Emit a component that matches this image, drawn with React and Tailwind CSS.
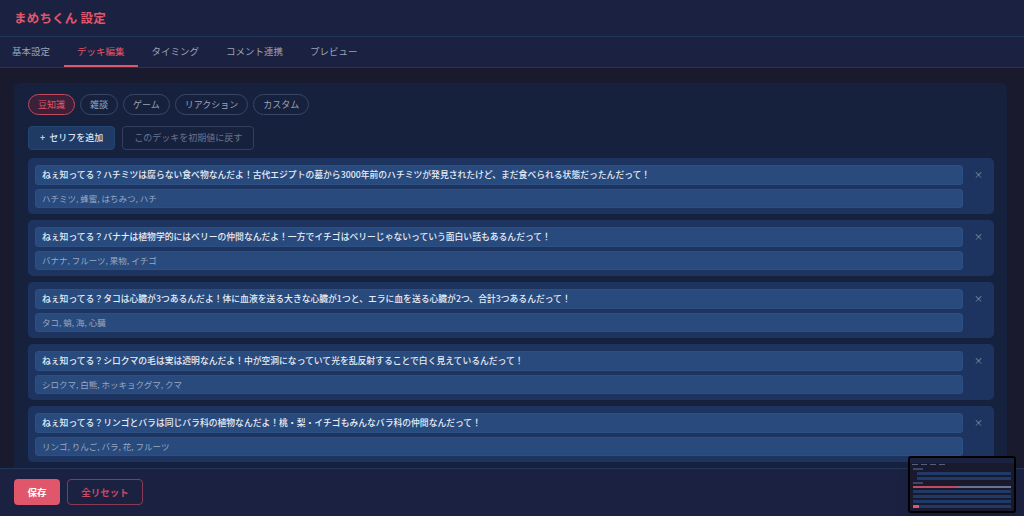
import { useState } from 'react'

const tabs = ['基本設定', 'デッキ編集', 'タイミング', 'コメント連携', 'プレビュー']
const decks = ['豆知識', '雑談', 'ゲーム', 'リアクション', 'カスタム']

const lines = [
  {
    text: 'ねぇ知ってる？ハチミツは腐らない食べ物なんだよ！古代エジプトの墓から3000年前のハチミツが発見されたけど、まだ食べられる状態だったんだって！',
    keys: 'ハチミツ, 蜂蜜, はちみつ, ハチ',
  },
  {
    text: 'ねぇ知ってる？バナナは植物学的にはベリーの仲間なんだよ！一方でイチゴはベリーじゃないっていう面白い話もあるんだって！',
    keys: 'バナナ, フルーツ, 果物, イチゴ',
  },
  {
    text: 'ねぇ知ってる？タコは心臓が3つあるんだよ！体に血液を送る大きな心臓が1つと、エラに血を送る心臓が2つ、合計3つあるんだって！',
    keys: 'タコ, 蛸, 海, 心臓',
  },
  {
    text: 'ねぇ知ってる？シロクマの毛は実は透明なんだよ！中が空洞になっていて光を乱反射することで白く見えているんだって！',
    keys: 'シロクマ, 白熊, ホッキョクグマ, クマ',
  },
  {
    text: 'ねぇ知ってる？リンゴとバラは同じバラ科の植物なんだよ！桃・梨・イチゴもみんなバラ科の仲間なんだって！',
    keys: 'リンゴ, りんご, バラ, 花, フルーツ',
  },
  {
    text: 'ねぇ知ってる？キリンの舌は青黒い色をしているんだよ！日焼けを防ぐためなんだって！',
    keys: 'キリン, 動物, 舌',
  },
]

function MiniPreview() {
  return (
    <div className="absolute bottom-[3px] right-[8px] h-[57px] w-[108px] overflow-hidden rounded-[3px] border-2 border-black bg-[#1a1a2e] shadow-lg">
      <div className="h-[5px] bg-[#1b2140]" />
      <div className="flex gap-[3px] px-[2px] pt-[1px]">
        <div className="h-[1px] w-[6px] bg-[#56607a]" />
        <div className="h-[1px] w-[6px] bg-[#56607a]" />
        <div className="h-[1px] w-[6px] bg-[#56607a]" />
        <div className="h-[1px] w-[6px] bg-[#56607a]" />
      </div>
      <div className="mx-[3px] mt-[3px] flex flex-col gap-[2px]">
        <div className="h-[2px] w-[10px] bg-[#3b4766]" />
        <div className="ml-[4px] h-[3px] bg-[#1f3a68]" />
        <div className="ml-[4px] h-[3px] bg-[#1f3a68]" />
        <div className="h-[2px] w-[10px] bg-[#3b4766]" />
        <div className="flex h-[2px]">
          <div className="w-[45%] bg-[#c04a5e]" />
          <div className="flex-1 bg-[#6b7590]" />
        </div>
        <div className="h-[3px] bg-[#1f3a68]" />
        <div className="h-[3px] bg-[#1f3a68]" />
        <div className="h-[3px] bg-[#1f3a68]" />
        <div className="h-[3px] bg-[#1f3a68]" />
      </div>
      <div className="absolute bottom-[3px] left-[3px] h-[3px] w-[6px] bg-[#e0566b]" />
    </div>
  )
}

export default function App() {
  const [activeTab, setActiveTab] = useState(1)
  const [activeDeck, setActiveDeck] = useState(0)

  return (
    <div className="relative flex h-[516px] w-full flex-col overflow-hidden bg-[#1a1a2e] font-['Noto_Sans_CJK_JP','Noto_Sans',sans-serif]">
      <header className="flex h-[37px] shrink-0 items-center border-b border-[#22365a] bg-[#1b2140] px-[14px]">
        <h1 className="text-[12.5px] font-bold tracking-[0.2px] text-[#e0566b]">まめちくん 設定</h1>
      </header>

      <nav className="flex h-[31px] shrink-0 border-b border-[#22365a] bg-[#1b2140]">
        {tabs.map((tab, i) => (
          <button
            key={tab}
            type="button"
            onClick={() => setActiveTab(i)}
            className={
              i === activeTab
                ? 'flex items-center border-b-2 border-[#e0566b] px-[13.5px] pt-[1px] text-[9.5px] text-[#e0566b] first:pl-[12px]'
                : 'flex items-center border-b-2 border-transparent px-[13.5px] pt-[1px] text-[9.5px] text-[#9aa3b8] first:pl-[12px]'
            }
          >
            {tab}
          </button>
        ))}
      </nav>

      <main className="min-h-0 flex-1 overflow-hidden pl-[14px] pr-[17px] pt-[15px]">
        <section className="rounded-[6px] bg-[#16213e] pb-[14px] pl-[14px] pr-[13px] pt-[11px]">
          <div className="flex gap-[5px]">
            {decks.map((deck, i) => (
              <button
                key={deck}
                type="button"
                onClick={() => setActiveDeck(i)}
                className={
                  i === activeDeck
                    ? 'h-[21px] rounded-full border border-[#c04a5e] bg-[#3a2038] px-[9px] text-[9px] text-[#e0566b]'
                    : 'h-[21px] rounded-full border border-[#3a4666] px-[9px] text-[9px] text-[#9aa3b8]'
                }
              >
                {deck}
              </button>
            ))}
          </div>

          <div className="mt-[11px] flex gap-[7px]">
            <button
              type="button"
              className="flex h-[24px] items-center gap-[4px] rounded-[4px] border border-[#24456f] bg-[#1f3a64] px-[11px] text-[9px] font-medium text-[#dce3ee]"
            >
              <span>+</span>
              <span>セリフを追加</span>
            </button>
            <button
              type="button"
              className="h-[24px] rounded-[4px] border border-[#333f5c] px-[11px] text-[9px] text-[#6b7590]"
            >
              このデッキを初期値に戻す
            </button>
          </div>

          <div className="mt-[8px] flex flex-col gap-[6px]">
            {lines.map((line) => (
              <div key={line.text} className="flex rounded-[5px] bg-[#1d3461] pb-[6px] pl-[7px] pt-[7px]">
                <div className="flex min-w-0 flex-1 flex-col gap-[4px]">
                  <div className="flex h-[20px] items-center rounded-[3px] border border-[#2c4f84] bg-[#284a7c] px-[6px] text-[8.8px] font-medium text-[#e8edf6]">
                    <span className="truncate">{line.text}</span>
                  </div>
                  <div className="flex h-[19px] items-center rounded-[3px] border border-[#2c4f84] bg-[#284a7c] px-[6px] text-[8.5px] text-[#9aa8c2]">
                    <span className="truncate">{line.keys}</span>
                  </div>
                </div>
                <button type="button" className="flex h-[20px] w-[31px] shrink-0 items-center justify-center text-[9px] text-[#8c97b0]">
                  ×
                </button>
              </div>
            ))}
          </div>
        </section>
      </main>

      <footer className="flex h-[48px] shrink-0 items-start gap-[7px] border-t border-[#22365a] bg-[#1b2140] px-[14px] pt-[10px]">
        <button type="button" className="flex h-[26px] w-[46px] items-center justify-center rounded-[4px] bg-[#e0566b] text-[9.5px] font-bold text-white">
          保存
        </button>
        <button
          type="button"
          className="flex h-[26px] w-[76px] items-center justify-center rounded-[4px] border border-[#8a3a55] text-[9.5px] font-bold text-[#c94a64]"
        >
          全リセット
        </button>
      </footer>

      <MiniPreview />
    </div>
  )
}
